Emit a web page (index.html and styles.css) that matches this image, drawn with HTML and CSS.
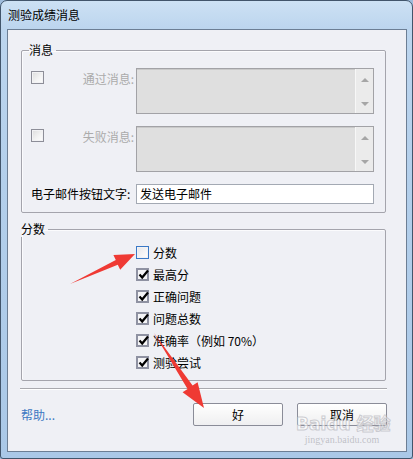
FILE: index.html
```html
<!DOCTYPE html>
<html lang="zh-CN">
<head>
  <meta charset="UTF-8">
  <meta name="viewport" content="width=device-width, initial-scale=1.0">
  <title>测验成绩消息</title>
  <link rel="stylesheet" href="styles.css">
</head>
<body>
  <div class="window">
    <div class="titlebar">测验成绩消息</div>

    <div class="client">
      <!-- Messages group -->
      <fieldset class="group group-msg">
        <legend>消息</legend>
        <div class="msg-grid">
          <span class="cb"></span>
          <label class="dim-label">通过消息:</label>
          <div class="memo">
            <div class="memo-body"></div>
            <div class="scroll"><span class="tri up"></span><span class="tri down"></span></div>
          </div>

          <span class="cb"></span>
          <label class="dim-label">失败消息:</label>
          <div class="memo">
            <div class="memo-body"></div>
            <div class="scroll"><span class="tri up"></span><span class="tri down"></span></div>
          </div>

          <label class="btn-label">电子邮件按钮文字:</label>
          <div class="text-input">发送电子邮件</div>
        </div>
      </fieldset>

      <!-- Score group -->
      <fieldset class="group group-score">
        <legend>分数</legend>
        <ul class="check-list">
          <li><span class="cb focus"></span>分数</li>
          <li><span class="cb checked"><svg viewBox="0 0 13 13"><path d="M2.5 6.5 L5.2 9.5 L11 2.5"/></svg></span>最高分</li>
          <li><span class="cb checked"><svg viewBox="0 0 13 13"><path d="M2.5 6.5 L5.2 9.5 L11 2.5"/></svg></span>正确问题</li>
          <li><span class="cb checked"><svg viewBox="0 0 13 13"><path d="M2.5 6.5 L5.2 9.5 L11 2.5"/></svg></span>问题总数</li>
          <li><span class="cb checked"><svg viewBox="0 0 13 13"><path d="M2.5 6.5 L5.2 9.5 L11 2.5"/></svg></span>准确率（例如 70%）</li>
          <li><span class="cb checked"><svg viewBox="0 0 13 13"><path d="M2.5 6.5 L5.2 9.5 L11 2.5"/></svg></span>测验尝试</li>
        </ul>
      </fieldset>

      <div class="separator"></div>

      <div class="footer">
        <a class="help" href="#">帮助...</a>
        <div class="buttons">
          <button class="btn">好</button>
          <button class="btn">取消</button>
        </div>
      </div>
    </div>
  </div>

  <!-- watermark -->
  <div class="watermark">
    <div class="wm-big">Baidu 经验</div>
    <div class="wm-small">jingyan.baidu.com</div>
  </div>

  <!-- annotation arrows -->
  <svg class="arrows" width="413" height="459" viewBox="0 0 413 459">
    <polygon points="70,284 115.8,260.1 113.4,255.1 135,254 120.2,269.7 117.8,264.7"/>
    <polygon points="154,333 192.6,385.5 197.6,382.2 204,408 182.6,392.2 187.6,388.9"/>
  </svg>
</body>
</html>
```

FILE: styles.css
```css
* {
  box-sizing: border-box;
}

body {
  margin: 0;
  width: 413px;
  height: 459px;
  font-family: "Noto Sans CJK SC", "DejaVu Sans", sans-serif;
  font-size: 12px;
  color: #000;
  background: #9fbcdc;
  position: relative;
  overflow: hidden;
}

.window {
  width: 413px;
  height: 459px;
  border: 1px solid #42556b;
  border-radius: 7px 7px 3px 3px;
  background: linear-gradient(180deg, #cde1f4 0%, #bcd5ee 6%, #b3cfeb 40%, #aac8e7 100%);
  padding: 0 5px 6px 6px;
  display: flex;
  flex-direction: column;
}

.titlebar {
  height: 28px;
  line-height: 28px;
  padding-left: 1px;
  font-size: 12px;
  color: #000;
}

.client {
  height: 423px;
  border: 1px solid #6c7e94;
  background: #eff0f5;
  display: flex;
  flex-direction: column;
}

/* group boxes */
.group {
  margin: 0 20px 0 13px;
  width: 365px;
  border: 1px solid #a4a4ac;
  border-radius: 2px;
  box-shadow: inset 1px 1px 0 #fbfbfd;
  min-width: 0;
}

.group legend {
  margin-left: -1px;
  padding: 0 3px 0 0;
  line-height: 16px;
  font-size: 12px;
}

.group-msg {
  margin-top: 12px;
  padding: 10px 8px 8px 8px;
}

.group-score {
  margin-top: 8px;
  padding: 4px 0 7px 0;
}

.msg-grid {
  display: grid;
  grid-template-columns: 48px 55px 240px;
  column-gap: 0;
  row-gap: 12px;
  padding-left: 1px;
}

.msg-grid .memo {
  margin-left: 2px;
}

.dim-label {
  color: #ababab;
  text-align: right;
  line-height: 17px;
  margin-top: 2px;
  white-space: nowrap;
}

.btn-label {
  grid-column: 1 / 3;
  justify-self: start;
  line-height: 19px;
  white-space: nowrap;
}

.memo {
  height: 46px;
  border: 1px solid #a2a2a6;
  display: flex;
  background: #dfdfdf;
}

.memo-body {
  flex: 1;
  border-top: 1px solid #c9c9c9;
}

.scroll {
  width: 18px;
  background: #ebebeb;
  border-left: 1px solid #f7f7f7;
  display: flex;
  flex-direction: column;
  justify-content: space-between;
  align-items: center;
  padding: 9px 0 7px;
}

.tri {
  width: 0;
  height: 0;
  border-left: 4px solid transparent;
  border-right: 4px solid transparent;
}

.tri.up {
  border-bottom: 4px solid #a6a6a6;
}

.tri.down {
  border-top: 4px solid #a6a6a6;
}

.text-input {
  margin-left: 2px;
  height: 20px;
  border: 1px solid #a3a9b3;
  background: #fff;
  line-height: 18px;
  padding-left: 3px;
  font-size: 12px;
}

/* check boxes */
.cb {
  display: inline-block;
  flex: none;
  width: 13px;
  height: 13px;
  border: 1px solid #8d8e98;
  background: linear-gradient(135deg, #dcdcdc 0%, #f4f4f4 60%, #fdfdfd 100%);
  box-shadow: inset 0 0 0 1px #f2f2f4;
  position: relative;
}

.msg-grid .cb {
  margin-top: 3px;
}

.cb.focus {
  border-color: #3a78c6;
  background: linear-gradient(135deg, #e6e6e8 0%, #f5f5f7 60%, #ffffff 100%);
}

.cb.checked {
  border: 2px solid #8f92a2;
  background: #f4f4f6;
  box-shadow: none;
}

.cb svg {
  position: absolute;
  left: -1px;
  top: -2px;
  width: 13px;
  height: 13px;
  overflow: visible;
}

.cb svg path {
  fill: none;
  stroke: #000;
  stroke-width: 2.2;
}

.check-list {
  list-style: none;
  margin: 0;
  padding: 0 0 0 114px;
}

.check-list li {
  height: 22px;
  display: flex;
  align-items: center;
  gap: 4px;
  font-size: 12px;
}

/* bottom area */
.separator {
  margin: 7px 0 0 12px;
  width: 367px;
  height: 2px;
  border-top: 1px solid #a9a9ae;
  border-bottom: 1px solid #ffffff;
}

.footer {
  display: flex;
  align-items: center;
  justify-content: space-between;
  padding: 13px 19px 0 13px;
}

.help {
  color: #3b78c2;
  text-decoration: none;
  font-size: 12px;
}

.buttons {
  display: flex;
  gap: 14px;
}

.btn {
  width: 90px;
  height: 23px;
  border: 1px solid #8a8c98;
  border-radius: 2px;
  background: linear-gradient(180deg, #ffffff 0%, #f7f7f7 50%, #efeff1 100%);
  font-family: "Noto Sans CJK SC", sans-serif;
  font-size: 12px;
  color: #000;
  padding: 0;
}

/* watermark and arrows lie over the dialog */
.watermark {
  position: absolute;
  left: 296px;
  top: 414px;
  width: 92px;
  text-align: center;
  white-space: nowrap;
  pointer-events: none;
}

.wm-big {
  font-family: "DejaVu Sans", "Noto Sans CJK SC", sans-serif;
  font-weight: bold;
  font-size: 17px;
  line-height: 20px;
  color: rgba(255, 255, 255, 0.6);
  -webkit-text-stroke: 1px rgba(160, 160, 168, 0.5);
}

.wm-small {
  font-family: "Liberation Serif", serif;
  font-size: 10px;
  line-height: 12px;
  color: rgba(160, 160, 168, 0.6);
}

.arrows {
  position: absolute;
  left: 0;
  top: 0;
  pointer-events: none;
}

.arrows polygon {
  fill: #ef3a34;
}
```
